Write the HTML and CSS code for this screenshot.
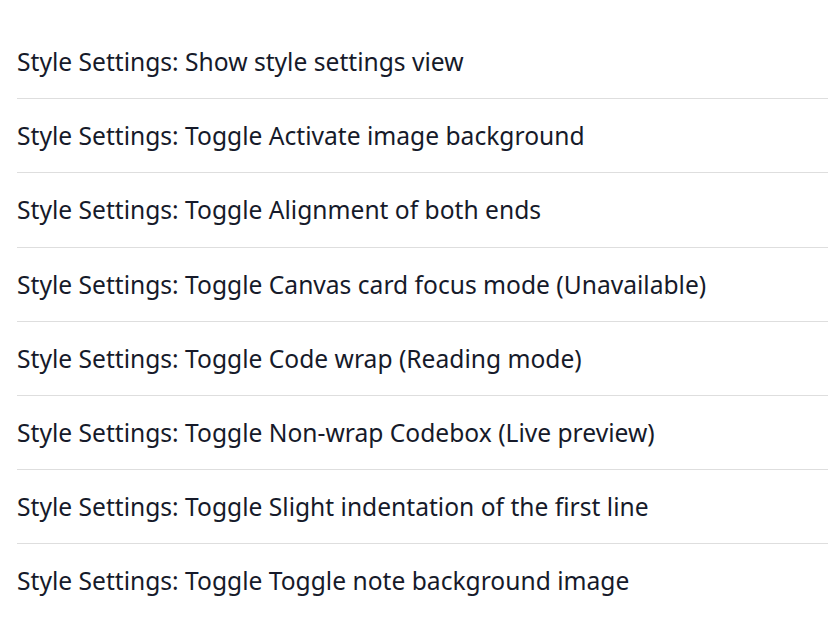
FILE: index.html
```html
<!DOCTYPE html>
<html>
<head>
<meta charset="utf-8">
<link rel="stylesheet" href="styles.css">
</head>
<body>
<ul class="command-list">
  <li class="command-item"><span class="command-text">Style Settings: Show style settings view</span></li>
  <li class="command-item"><span class="command-text">Style Settings: Toggle Activate image background</span></li>
  <li class="command-item"><span class="command-text">Style Settings: Toggle Alignment of both ends</span></li>
  <li class="command-item"><span class="command-text">Style Settings: Toggle Canvas card focus mode (Unavailable)</span></li>
  <li class="command-item"><span class="command-text">Style Settings: Toggle Code wrap (Reading mode)</span></li>
  <li class="command-item"><span class="command-text">Style Settings: Toggle Non-wrap Codebox (Live preview)</span></li>
  <li class="command-item"><span class="command-text">Style Settings: Toggle Slight indentation of the first line</span></li>
  <li class="command-item"><span class="command-text">Style Settings: Toggle Toggle note background image</span></li>
</ul>
</body>
</html>
```
FILE: styles.css
```css
html, body {
  margin: 0;
  padding: 0;
  background: #ffffff;
  overflow: hidden;
}
.command-list {
  list-style: none;
  margin: 0;
  padding: 25px 0 0 17px;
  font-family: "Noto Sans", sans-serif;
  font-size: 24.6px;
  color: #161a2a;
}
.command-item {
  height: 73.2px;
  display: flex;
  align-items: center;
  border-bottom: 1px solid #dedede;
  white-space: nowrap;
}
.command-item:last-child {
  border-bottom: none;
}
```
